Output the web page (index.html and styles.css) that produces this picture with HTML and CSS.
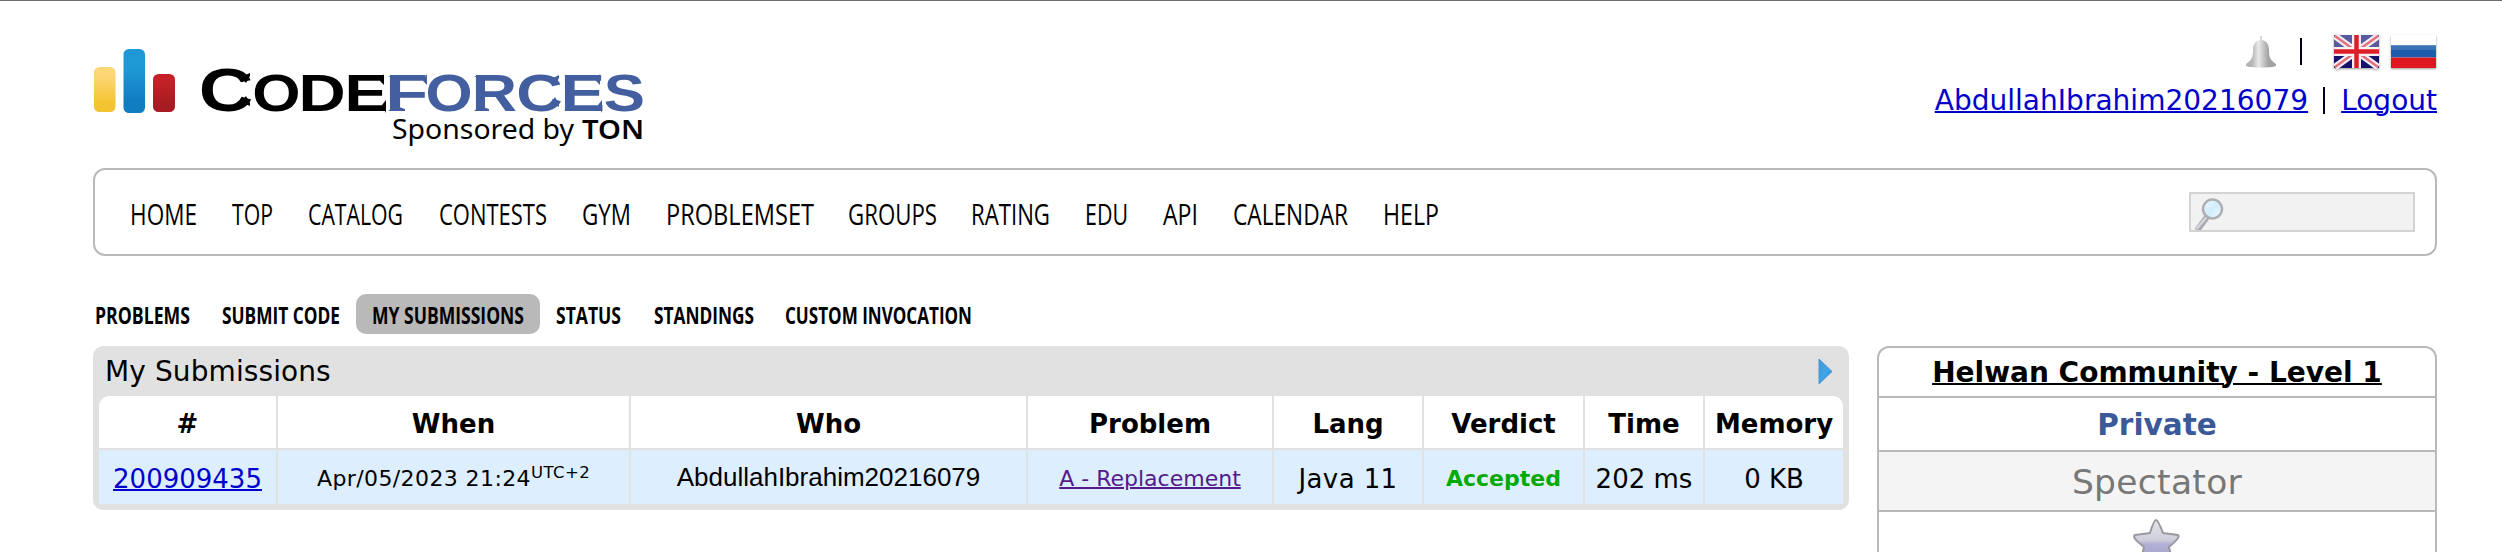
FILE: index.html
```
<!DOCTYPE html>
<html lang="en">
<head>
<meta charset="utf-8">
<title>My Submissions - Codeforces</title>
<link rel="stylesheet" href="styles.css">
</head>
<body>
<div class="page">
  <header class="header">
    <svg class="logo" width="552" height="104" viewBox="93 45 552 104">
      <defs>
        <linearGradient id="ly" x1="0" y1="0" x2="0" y2="1"><stop offset="0.2" stop-color="#fdd675"/><stop offset="0.8" stop-color="#f4c430"/></linearGradient>
        <linearGradient id="lb" x1="0" y1="0" x2="0" y2="1"><stop offset="0.3" stop-color="#1f99d6"/><stop offset="0.8" stop-color="#117dc1"/></linearGradient>
        <linearGradient id="lr" x1="0" y1="0" x2="0" y2="1"><stop offset="0.2" stop-color="#c42127"/><stop offset="0.8" stop-color="#a71b22"/></linearGradient>
      </defs>
      <rect x="94" y="67" width="21.500" height="45" rx="5.500" fill="url(#ly)"/>
      <rect x="123.500" y="49" width="21.500" height="64" rx="5.500" fill="url(#lb)"/>
      <rect x="153" y="74" width="22" height="38" rx="5.500" fill="url(#lr)"/>
      <text class="brand" y="111"><tspan class="brand-big" x="198.700" textLength="54.500" lengthAdjust="spacingAndGlyphs">C</tspan><tspan x="252.300" textLength="48.300" lengthAdjust="spacingAndGlyphs">O</tspan><tspan x="298.500" textLength="47.200" lengthAdjust="spacingAndGlyphs">D</tspan><tspan x="344.600" textLength="43.400" lengthAdjust="spacingAndGlyphs">E</tspan><tspan class="brand-blue" x="385.300" textLength="42.900" lengthAdjust="spacingAndGlyphs">F</tspan><tspan class="brand-blue" x="425.400" textLength="47.100" lengthAdjust="spacingAndGlyphs">O</tspan><tspan class="brand-blue" x="471.800" textLength="45.300" lengthAdjust="spacingAndGlyphs">R</tspan><tspan class="brand-blue" x="516.200" textLength="46.500" lengthAdjust="spacingAndGlyphs">C</tspan><tspan class="brand-blue" x="560.500" textLength="44.600" lengthAdjust="spacingAndGlyphs">E</tspan><tspan class="brand-blue" x="603.800" textLength="41.200" lengthAdjust="spacingAndGlyphs">S</tspan></text>
      <g class="brand-serifs">
        <path d="M250 73v3l-4 7-5-6zM250 106v-3l-4-7-5 6zM303 76h5v3zM303 111h5v-3zM349 76h5v3zM349 111h5v-3zM384 74v11l-4-4zM386 113v-13l-4 5z"/>
        <path class="brand-blue" d="M388 76h8v3zM388 111h17v-2l-9-3zM427 74v11l-4-4zM474 76h6v3zM474 111h15v-2l-9-3zM559 75v3l-4 7-4-6zM559 107v-3l-4-7-4 6zM564 76h6v3zM564 111h6v-3zM600 74v11l-4-4zM602 113v-13l-4 5z"/>
      </g>
      <text class="sponsor" x="392" y="139" textLength="182" lengthAdjust="spacingAndGlyphs">Sponsored by</text>
      <text class="sponsor sponsor-bold" x="582" y="139" textLength="62" lengthAdjust="spacingAndGlyphs">TON</text>
    </svg>
    <div class="account">
      <div class="account-icons">
        <svg class="bell" width="32" height="34" viewBox="0 0 32 34">
          <defs><linearGradient id="bell" x1="0" x2="1"><stop offset="0.2" stop-color="#b5b5b5"/><stop offset="0.42" stop-color="#e9e9e9"/><stop offset="0.75" stop-color="#a2a2a2"/></linearGradient></defs>
          <path d="M15 1h2v4c5 1 7 5 7 10 0 7 1 10 7 14v2c-4 2-26 2-30 0v-2c6-4 7-7 7-14 0-5 2-9 7-10z" fill="url(#bell)"/>
        </svg>
        <span class="bar"></span>
        <svg class="flag" width="45" height="35" viewBox="0 0 45 35">
          <rect width="45" height="33" fill="#14126a"/>
          <rect width="45" height="15" fill="#5a5aa0"/>
          <path d="M1 1L44 32M44 1L1 32" stroke="#f4eff4" stroke-width="6.500"/>
          <path d="M1 1L44 32M44 1L1 32" stroke="#e2707c" stroke-width="2.500"/>
          <path d="M22.500 0V33M0 16.500H45" stroke="#f7f1f4" stroke-width="9"/>
          <path d="M22.500 0V33M0 16.500H45" stroke="#dd2028" stroke-width="4.500"/>
        </svg>
        <svg class="flag" width="45" height="35" viewBox="0 0 45 35">
          <rect width="45" height="33" fill="#fff"/>
          <rect y="10.500" width="45" height="12" fill="#1c5cab"/>
          <rect y="10.500" width="45" height="4.500" fill="#3b72b7"/>
          <rect y="22.500" width="45" height="10.500" fill="#df1820"/>
        </svg>
      </div>
      <div class="account-links"><a class="user" href="#">AbdullahIbrahim20216079</a><span class="bar"></span><a class="logout" href="#">Logout</a></div>
    </div>
  </header>

  <nav class="menu">
    <ul class="menu-list">
      <li><svg width="67" height="32"><text y="25" textLength="67" lengthAdjust="spacingAndGlyphs">HOME</text></svg></li>
      <li><svg width="41" height="32"><text y="25" textLength="41" lengthAdjust="spacingAndGlyphs">TOP</text></svg></li>
      <li><svg width="95" height="32"><text y="25" textLength="95" lengthAdjust="spacingAndGlyphs">CATALOG</text></svg></li>
      <li><svg width="108" height="32"><text y="25" textLength="108" lengthAdjust="spacingAndGlyphs">CONTESTS</text></svg></li>
      <li><svg width="49" height="32"><text y="25" textLength="49" lengthAdjust="spacingAndGlyphs">GYM</text></svg></li>
      <li><svg width="147" height="32"><text y="25" textLength="148" lengthAdjust="spacingAndGlyphs">PROBLEMSET</text></svg></li>
      <li><svg width="88" height="32"><text y="25" textLength="89" lengthAdjust="spacingAndGlyphs">GROUPS</text></svg></li>
      <li><svg width="78" height="32"><text y="25" textLength="79" lengthAdjust="spacingAndGlyphs">RATING</text></svg></li>
      <li><svg width="43" height="32"><text y="25" textLength="43" lengthAdjust="spacingAndGlyphs">EDU</text></svg></li>
      <li><svg width="35" height="32"><text y="25" textLength="35" lengthAdjust="spacingAndGlyphs">API</text></svg></li>
      <li><svg width="115" height="32"><text y="25" textLength="115" lengthAdjust="spacingAndGlyphs">CALENDAR</text></svg></li>
      <li><svg width="56" height="32"><text y="25" textLength="56" lengthAdjust="spacingAndGlyphs">HELP</text></svg></li>
    </ul>
    <div class="search">
      <svg width="32" height="34" viewBox="0 0 32 34">
        <defs><linearGradient id="lens" x1="0" y1="0" x2="1" y2="1"><stop offset="0" stop-color="#f2faff"/><stop offset="0.5" stop-color="#cfecfd"/><stop offset="1" stop-color="#f4fbff"/></linearGradient></defs>
        <path d="M13 20L3 33.500" stroke="#a9a9b1" stroke-width="6"/>
        <path d="M12.500 20L2.500 32" stroke="#d5d5de" stroke-width="2.500"/>
        <circle cx="18.500" cy="12" r="9.500" fill="url(#lens)" stroke="#adb0b3" stroke-width="2.500"/>
      </svg>
    </div>
  </nav>

  <div class="columns">
    <main class="content">
      <ul class="submenu">
        <li><svg width="95" height="24"><text y="19" textLength="95" lengthAdjust="spacingAndGlyphs">PROBLEMS</text></svg></li>
        <li><svg width="118" height="24"><text y="19" textLength="118" lengthAdjust="spacingAndGlyphs">SUBMIT CODE</text></svg></li>
        <li class="current"><svg width="152" height="24"><text y="19" textLength="152" lengthAdjust="spacingAndGlyphs">MY SUBMISSIONS</text></svg></li>
        <li><svg width="65" height="24"><text y="19" textLength="65" lengthAdjust="spacingAndGlyphs">STATUS</text></svg></li>
        <li><svg width="99" height="24"><text y="19" textLength="100" lengthAdjust="spacingAndGlyphs">STANDINGS</text></svg></li>
        <li><svg width="187" height="24"><text y="19" textLength="187" lengthAdjust="spacingAndGlyphs">CUSTOM INVOCATION</text></svg></li>
      </ul>
      <section class="datatable">
        <div class="datatable-title">
          <span>My Submissions</span>
          <svg width="15" height="27" viewBox="0 0 15 27">
            <defs><linearGradient id="arrow" x1="0" x2="1" y1="0" y2="1"><stop offset="0" stop-color="#4a94d2"/><stop offset="0.55" stop-color="#3ea6ea"/><stop offset="1" stop-color="#1f74bf"/></linearGradient></defs>
            <path d="M1 1L14 13.500L1 26z" fill="url(#arrow)" stroke="#4a97d0"/>
          </svg>
        </div>
        <div class="grid">
          <div class="th">#</div><div class="th">When</div><div class="th">Who</div><div class="th">Problem</div><div class="th">Lang</div><div class="th">Verdict</div><div class="th">Time</div><div class="th">Memory</div>
          <div class="td"><a href="#">200909435</a></div>
          <div class="td small when">Apr/05/2023 21:24<span class="zone">UTC+2</span></div>
          <div class="td who">AbdullahIbrahim20216079</div>
          <div class="td small"><a class="visited" href="#">A - Replacement</a></div>
          <div class="td lang">Java 11</div>
          <div class="td small accepted">Accepted</div>
          <div class="td">202 ms</div>
          <div class="td">0 KB</div>
        </div>
      </section>
    </main>
    <aside class="sidebar">
      <div class="group-name"><a href="#">Helwan Community - Level 1</a></div>
      <div class="group-type">Private</div>
      <div class="group-role">Spectator</div>
      <div class="group-star">
        <svg width="50" height="50" viewBox="0 0 50 50">
          <defs><linearGradient id="star" x1="0" y1="0" x2="0" y2="1"><stop offset="0" stop-color="#e4e4e8"/><stop offset="0.45" stop-color="#cfcfdd"/><stop offset="0.55" stop-color="#b1b0d4"/><stop offset="1" stop-color="#a09fca"/></linearGradient></defs>
          <path d="M24 2Q26 2 31 15L46 17Q49 19 37 29L41 46L24 38L8 46L12 29Q-1 19 3 17L18 15Q22 2 24 2z" fill="url(#star)" stroke="#99999f" stroke-width="2" stroke-linejoin="round"/>
        </svg>
      </div>
    </aside>
  </div>
</div>
</body>
</html>
```
FILE: styles.css
```
* { box-sizing: border-box; }
body {
  margin: 0;
  height: 552px;
  overflow: hidden;
  background: #fff;
  color: #000;
  font-family: Verdana, "DejaVu Sans", sans-serif;
  font-size: 26px;
  border-top: 1px solid #6e6e6e;
}
ul { list-style: none; margin: 0; padding: 0; }
svg { display: block; overflow: visible; }
a { color: #00c; text-decoration-thickness: 2px; }
.page { width: 2344px; margin-left: 93px; }

.header { display: flex; justify-content: space-between; height: 167px; padding-top: 34px; }
.logo { margin-top: 10px; }
.brand { font-family: "Liberation Sans", Arial, sans-serif; font-weight: bold; font-size: 51px; }
.brand-big { font-size: 62px; }
.brand-blue { fill: #435f9f; }
.sponsor { font-family: "Noto Sans", sans-serif; font-size: 27px; }
.sponsor-bold { font-weight: 600; }
.account { display: flex; flex-direction: column; align-items: flex-end; }
.account-icons { display: flex; height: 36px; gap: 12px; align-items: flex-start; padding-right: 1px; }
.bell { margin-right: 11px; }
.bar { width: 2px; height: 27px; background: #000020; }
.account-icons .bar { margin: 3px 20px 0 0; }
.flag { filter: drop-shadow(0 1px 1px rgba(0, 0, 0, .4)); }
.account-links { display: flex; align-items: center; height: 58px; font-size: 28px; }
.account-links .bar { margin: 0 16px 0 15px; }
.user { letter-spacing: 0.02px; }

.menu {
  display: flex;
  justify-content: space-between;
  align-items: center;
  height: 88px;
  padding: 0 20px 0 35px;
  border: 2px solid #b9b9b9;
  border-radius: 12px;
}
.menu-list { display: flex; gap: 35.200px; padding-top: 7px; font-family: "Open Sans", sans-serif; font-size: 29px; }
.search { width: 226px; height: 40px; padding: 3px 0 0 3px; border: 2px solid #d3d3d3; background: #f2f2f2; overflow: hidden; }

.columns { display: flex; justify-content: space-between; }
.content { width: 1756px; padding-top: 38px; }
.submenu { display: flex; margin-bottom: 12px; font-family: "Open Sans", sans-serif; font-weight: bold; font-size: 23px; }
.submenu li { height: 40px; padding: 11px 16.500px 0 16px; }
.submenu li:first-child { padding: 11px 16px 0 2px; }
.submenu li:nth-child(2) { padding-right: 16px; }
.submenu .current { padding: 11px 16px 0; background: #b9b9b9; border-radius: 10px; }

.datatable { height: 164px; padding: 0 6px 6px; border-radius: 10px; background: #e1e1e1; }
.datatable-title { display: flex; justify-content: space-between; align-items: center; height: 50px; padding: 1px 10px 0 6px; font-size: 28px; letter-spacing: 0.1px; }
.grid {
  display: grid;
  grid-template-columns: 177px 351px 395px 244px 148px 159px 118px 138px;
  grid-template-rows: 52px 54px;
  gap: 2px;
  border-radius: 10px 10px 0 0;
  overflow: hidden;
}
.th, .td { display: flex; align-items: center; justify-content: center; white-space: nowrap; }
.th { background: #fff; font-weight: bold; padding-top: 4px; }
.td { background: #def; padding-top: 3px; }
.small { font-size: 22px; padding-top: 2px; }
.when { letter-spacing: 0.4px; }
.zone { font-size: 16.500px; padding-bottom: 11px; }
.who { font-family: Arial, "Liberation Sans", sans-serif; font-size: 26px; padding-top: 1px; }
.lang { letter-spacing: 0.4px; }
.visited { color: #551a8b; }
.accepted { color: #0a0; font-weight: bold; }

.sidebar { width: 560px; height: 230px; margin-top: 90px; border: 2px solid #b9b9b9; border-radius: 12px; text-align: center; }
.sidebar > div { display: flex; justify-content: center; align-items: center; border-bottom: 2px solid #b9b9b9; }
.sidebar .group-name { height: 50px; padding-top: 1px; font-weight: bold; font-size: 28px; }
.group-name a { color: #000; }
.sidebar .group-type { height: 54px; padding-top: 2px; font-weight: bold; font-size: 29.500px; color: #3b5998; }
.sidebar .group-role { height: 60px; padding-top: 2px; font-size: 34.500px; letter-spacing: 0.3px; color: #777; background: #f4f4f4; }
.group-star { padding-top: 6px; }
```
